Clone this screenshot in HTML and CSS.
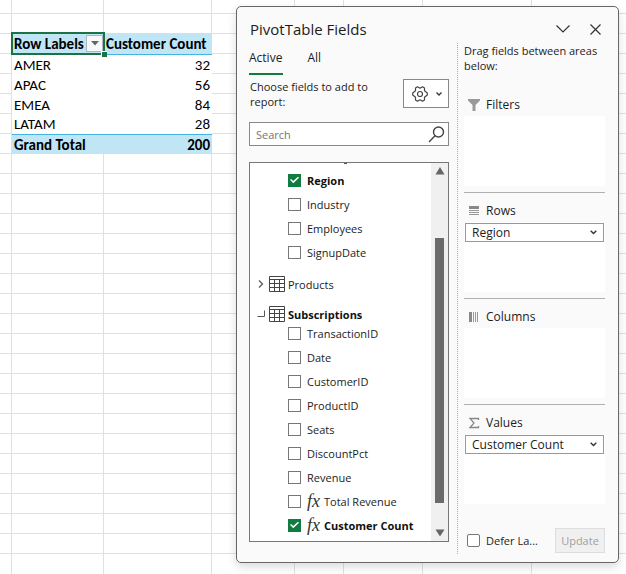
FILE: index.html
```html
<!DOCTYPE html>
<html lang="en">
<head>
<meta charset="utf-8">
<title>PivotTable Fields</title>
<link rel="stylesheet" href="styles.css">
</head>
<body>
<main class="sheet">
  <table class="pivot">
    <thead>
      <tr>
        <th class="active-cell" scope="col"><span class="cell-inner">Row Labels
          <button class="filter-btn" type="button" aria-label="Filter"><svg width="8" height="5" viewBox="0 0 8 5"><path d="M0 0h8L4 4.500z" fill="#666"/></svg></button></span></th>
        <th scope="col">Customer Count</th>
      </tr>
    </thead>
    <tbody>
      <tr><td>AMER</td><td class="num">32</td></tr>
      <tr><td>APAC</td><td class="num">56</td></tr>
      <tr><td>EMEA</td><td class="num">84</td></tr>
      <tr><td>LATAM</td><td class="num">28</td></tr>
    </tbody>
    <tfoot>
      <tr><th scope="row">Grand Total</th><td class="num">200</td></tr>
    </tfoot>
  </table>

  <section class="panel">
    <header class="panel-head">
      <h1>PivotTable Fields</h1>
      <button class="icon-btn" type="button" aria-label="Collapse"><svg width="14" height="8" viewBox="0 0 14 8"><path d="M.5.5 7 7 13.500.5" fill="none" stroke="#333" stroke-width="1.200"/></svg></button>
      <button class="icon-btn" type="button" aria-label="Close"><svg width="11" height="11" viewBox="0 0 11 11"><path d="M.5.5l10 10M10.500.5l-10 10" fill="none" stroke="#333" stroke-width="1.200"/></svg></button>
    </header>

    <div class="panel-body">
      <div class="fields">
        <nav class="tabs">
          <button class="tab selected" type="button">Active</button>
          <button class="tab" type="button">All</button>
        </nav>
        <div class="choose">
          <p>Choose fields to add to report:</p>
          <button class="tools" type="button" aria-label="Tools">
            <svg width="18" height="18" viewBox="0 0 18 18" fill="none" stroke="#444" stroke-width="1.200" stroke-linejoin="round"><path d="M6.500 1.800 9 3.200l2.500-1.400 2 1.200v2.800L16.300 8v2l-2.800 2.200V15l-2 1.200L9 14.800l-2.500 1.400-2-1.200v-2.800L1.700 10V8l2.800-2.200V3z"/><circle cx="9" cy="9" r="2.500"/></svg>
            <svg width="6" height="4" viewBox="0 0 6 4"><path d="M.5.5 3 3 5.500.5" fill="none" stroke="#333" stroke-width="1.300"/></svg>
          </button>
        </div>
        <div class="search">
          <input type="search" placeholder="Search" aria-label="Search">
          <svg width="17" height="17" viewBox="0 0 17 17" fill="none" stroke="#444" stroke-width="1.400"><circle cx="10.500" cy="6" r="5"/><path d="M7 9.700 1 16"/></svg>
        </div>

        <div class="list">
          <div class="tree">
            <ul>
              <li><label class="field on"><input type="checkbox" checked>Region</label></li>
              <li><label class="field"><input type="checkbox">Industry</label></li>
              <li><label class="field"><input type="checkbox">Employees</label></li>
              <li><label class="field"><input type="checkbox">SignupDate</label></li>
            </ul>
            <div class="group">
              <svg class="twist" width="8" height="10" viewBox="0 0 8 10"><path d="M2 1.500 5.500 5 2 8.500" fill="none" stroke="#555" stroke-width="1.200"/></svg>
              <svg width="16" height="16" viewBox="0 0 16 16" fill="none" stroke="#444"><path d="M.5.5h15v15H.5zM.5 3.500h15M.5 7.500h15M.5 11.500h15M5.500 3.500v12M10.500 3.500v12"/></svg>
              <span>Products</span>
            </div>
            <div class="group open">
              <svg class="twist" width="8" height="10" viewBox="0 0 8 10"><path d="M7.500 1.500v6H.5" fill="none" stroke="#555"/></svg>
              <svg width="16" height="16" viewBox="0 0 16 16" fill="none" stroke="#444"><path d="M.5.5h15v15H.5zM.5 3.500h15M.5 7.500h15M.5 11.500h15M5.500 3.500v12M10.500 3.500v12"/></svg>
              <span>Subscriptions</span>
            </div>
            <ul>
              <li><label class="field"><input type="checkbox">TransactionID</label></li>
              <li><label class="field"><input type="checkbox">Date</label></li>
              <li><label class="field"><input type="checkbox">CustomerID</label></li>
              <li><label class="field"><input type="checkbox">ProductID</label></li>
              <li><label class="field"><input type="checkbox">Seats</label></li>
              <li><label class="field"><input type="checkbox">DiscountPct</label></li>
              <li><label class="field"><input type="checkbox">Revenue</label></li>
              <li><label class="field"><input type="checkbox"><i class="fx">fx</i>Total Revenue</label></li>
              <li><label class="field on"><input type="checkbox" checked><i class="fx">fx</i>Customer Count</label></li>
            </ul>
          </div>
          <div class="scrollbar">
            <svg width="10" height="8" viewBox="0 0 10 8"><path d="M5 0l4.500 7.500h-9z" fill="#666"/></svg>
            <div class="thumb"></div>
            <svg width="10" height="8" viewBox="0 0 10 8"><path d="M5 7.500L.5.5h9z" fill="#666"/></svg>
          </div>
        </div>
      </div>

      <div class="areas">
        <p class="drag">Drag fields between areas below:</p>
        <section class="area">
          <h2><svg width="12" height="12" viewBox="0 0 12 12"><path d="M0 0h12v1.500L7.500 6v6h-3V6L0 1.500z" fill="#999"/></svg>Filters</h2>
          <div class="drop"></div>
        </section>
        <section class="area">
          <h2><svg width="12" height="12" viewBox="0 0 12 12"><path d="M1 1h10v3H1z" fill="#888"/><path d="M1 5.500h10M1 7.500h10M1 9.500h10" stroke="#999"/></svg>Rows</h2>
          <div class="drop"><div class="pick"><select aria-label="Rows"><option>Region</option></select><svg width="7" height="5" viewBox="0 0 7 5"><path d="M.7.7l2.800 2.800L6.300.7" fill="none" stroke="#333" stroke-width="1.400"/></svg></div></div>
        </section>
        <section class="area">
          <h2><svg width="12" height="12" viewBox="0 0 12 12"><path d="M1 1h3v10H1z" fill="#888"/><path d="M5.500 1v10M7.500 1v10M9.500 1v10" stroke="#999"/></svg>Columns</h2>
          <div class="drop"></div>
        </section>
        <section class="area last">
          <h2><svg width="12" height="12" viewBox="0 0 12 12"><path d="M10.500 3V1.500H2L6 6l-4 4.500h8.500V9" fill="none" stroke="#888" stroke-width="1.300"/></svg>Values</h2>
          <div class="drop"><div class="pick"><select aria-label="Values"><option>Customer Count</option></select><svg width="7" height="5" viewBox="0 0 7 5"><path d="M.7.7l2.800 2.800L6.300.7" fill="none" stroke="#333" stroke-width="1.400"/></svg></div></div>
        </section>
        <footer class="defer">
          <label><input type="checkbox">Defer La...</label>
          <button type="button" disabled>Update</button>
        </footer>
      </div>
    </div>
  </section>
</main>
</body>
</html>
```
FILE: styles.css
```css
* { box-sizing: border-box; }

body {
  margin: 0;
  font-family: "Open Sans", "Noto Sans", sans-serif;
  font-size: 11px;
  color: #1c1c1c;
  background: #fff;
}

h1, h2, p, ul { margin: 0; padding: 0; font-weight: 400; }
ul { list-style: none; }
svg { flex: none; display: block; }
button, input, select { font: inherit; color: inherit; margin: 0; padding: 0; }

/* Worksheet: column and row gridlines sit behind the content */
.sheet {
  --line: #e0e0e0;
  display: flex;
  align-items: flex-start;
  gap: 24px;
  min-height: 100vh;
  padding: 6px 7px 12px 12px;
  background:
    linear-gradient(var(--line), var(--line)) 11px 0 / 1px 100% no-repeat,
    linear-gradient(var(--line), var(--line)) 103px 0 / 1px 100% no-repeat,
    linear-gradient(var(--line), var(--line)) 211px 0 / 1px 100% no-repeat,
    linear-gradient(var(--line), var(--line)) 294px 0 / 1px 100% no-repeat,
    linear-gradient(var(--line), var(--line)) 343px 0 / 1px 100% no-repeat,
    linear-gradient(var(--line), var(--line)) 422px 0 / 1px 100% no-repeat,
    linear-gradient(var(--line), var(--line)) 531px 0 / 1px 100% no-repeat,
    repeating-linear-gradient(transparent 0 19px, var(--line) 19px 20px) 0 -6px;
}

.pivot {
  flex: none;
  width: 200px;
  margin-top: 27px;
  border-collapse: collapse;
  table-layout: fixed;
  font-family: Carlito, Lato, sans-serif;
  font-size: 15px;
  line-height: 18px;
  color: #000;
  background: #fff;
}
.pivot th, .pivot td { height: 20px; padding: 1px 2px 0; text-align: left; white-space: nowrap; }
.pivot th:first-child { width: 92px; }
.pivot .num { text-align: right; }
.pivot thead th, .pivot tfoot th, .pivot tfoot td { background: #c0e6f5; font-weight: 700; }
.pivot thead th { height: 21px; border-bottom: 1px solid #44b3e1; }
.pivot tfoot th, .pivot tfoot td { border-top: 1px solid #44b3e1; }
.pivot .active-cell { position: relative; outline: 2px solid #1b7244; outline-offset: -1px; }
.active-cell::after {
  content: "";
  position: absolute;
  right: -3px;
  bottom: -3px;
  width: 5px;
  height: 5px;
  background: #1b7244;
  border: solid #fff;
  border-width: 1px 0 0 1px;
}
.cell-inner { display: flex; align-items: center; justify-content: space-between; margin-right: -1px; }
.filter-btn {
  display: grid;
  place-items: center;
  width: 17px;
  height: 17px;
  background: #f8f8fa;
  border: 1px solid #b0b4c0;
}

.panel {
  flex: 1;
  min-width: 0;
  padding: 11px 13px 8px 12px;
  background: #fafafa;
  border: 1px solid #666;
  border-radius: 5px;
  box-shadow: 0 4px 10px rgba(0, 0, 0, .14);
}
.panel-head { display: flex; align-items: center; gap: 10px; height: 22px; margin-right: -1px; }
.panel-head h1 { flex: 1; padding-left: 1px; font-size: 15px; line-height: 20px; }
.icon-btn { display: grid; place-items: center; width: 22px; height: 22px; background: none; border: 0; }

.panel-body { display: grid; grid-template-columns: 1fr 148px; }

.fields { display: flex; flex-direction: column; padding: 10px 8px 12px 0; }
.tabs { display: flex; gap: 24px; font-size: 12px; }
.tab {
  height: 25px;
  padding: 0 1px 8px 0;
  line-height: 16px;
  background: none;
  border: 0;
  border-bottom: 2px solid transparent;
}
.tab.selected { border-color: #107c41; }
.choose { display: flex; justify-content: space-between; margin-top: 4px; }
.choose p { width: 130px; padding-left: 1px; line-height: 15px; }
.tools {
  display: flex;
  align-items: center;
  justify-content: center;
  gap: 7px;
  width: 46px;
  height: 29px;
  background: #fff;
  border: 1px solid #888;
}
.search {
  display: flex;
  align-items: center;
  height: 24px;
  margin-top: 13px;
  padding-right: 3px;
  background: #fff;
  border: 1px solid #888;
}
.search input { flex: 1; min-width: 0; padding-left: 6px; background: none; border: 0; outline: 0; appearance: none; }
.search input::placeholder { color: #767676; }

.list { position: relative; display: flex; flex: 1; margin-top: 16px; background: #fff; border: 1px solid #777; }
/* Tail of the row that is scrolled off above */
.list::before { content: ""; position: absolute; left: 94px; top: 0; width: 3px; height: 1px; background: #555; }
.tree { flex: 1; padding: 5px 0 4px; }
.field { display: flex; align-items: center; height: 24px; padding-left: 38px; white-space: nowrap; }
.field input { margin-right: 6px; }
.field.on, .group.open { font-weight: 700; color: #111; }
.fx { width: 17px; font-family: "Liberation Serif", serif; font-size: 18px; line-height: 20px; font-weight: 400; color: #333; }
.group { display: flex; align-items: center; height: 14px; margin-top: 13px; padding-left: 7px; }
.group.open { margin-top: 16px; }
.group .twist { margin-right: 4px; }
.group span { padding-left: 3px; }

input[type="checkbox"] {
  flex: none;
  display: grid;
  place-items: center;
  width: 13px;
  height: 13px;
  appearance: none;
  background: #fff;
  border: 1px solid #777;
}
input[type="checkbox"]:checked { background: #107c41; border-color: #107c41; }
input[type="checkbox"]:checked::before {
  content: "";
  width: 9px;
  height: 7px;
  background: #fff;
  clip-path: polygon(0 48%, 12% 34%, 36% 66%, 88% 4%, 100% 18%, 36% 96%);
}

.scrollbar {
  display: flex;
  flex-direction: column;
  align-items: center;
  width: 17px;
  padding: 4px 0;
  background: #f0f0f0;
}
.thumb { flex: 1; width: 9px; margin: 63px 0 26px; background: #6a6a6a; }

.areas { margin-top: 3px; padding: 0 0 1px 6px; border-left: 1px dotted #aaa; }
.drag { height: 44px; line-height: 15px; }
.area { padding-bottom: 6px; border-bottom: 1px solid #b0b0b0; }
.area.last { border: 0; }
.area h2 {
  display: flex;
  align-items: center;
  gap: 6px;
  height: 29px;
  padding: 6px 0 0 4px;
  font-size: 12px;
}
.drop { height: 70px; padding: 1px; background: #fff; }
.pick { display: flex; align-items: center; font-size: 12px; }
.pick select {
  flex: 1;
  min-width: 0;
  height: 19px;
  padding-left: 6px;
  appearance: none;
  background: #fff;
  border: 1px solid #999;
  border-radius: 0;
}
.pick svg { margin: 0 7px 0 -14px; pointer-events: none; }

.defer { display: flex; align-items: center; justify-content: space-between; margin-top: 18px; }
.defer label { display: flex; align-items: center; gap: 6px; padding-left: 3px; white-space: nowrap; }
.defer input[type="checkbox"] { border-radius: 2px; }
.defer button { width: 50px; height: 25px; color: #a0a0a0; background: #f0f0f0; border: 1px solid #ddd; }
```
